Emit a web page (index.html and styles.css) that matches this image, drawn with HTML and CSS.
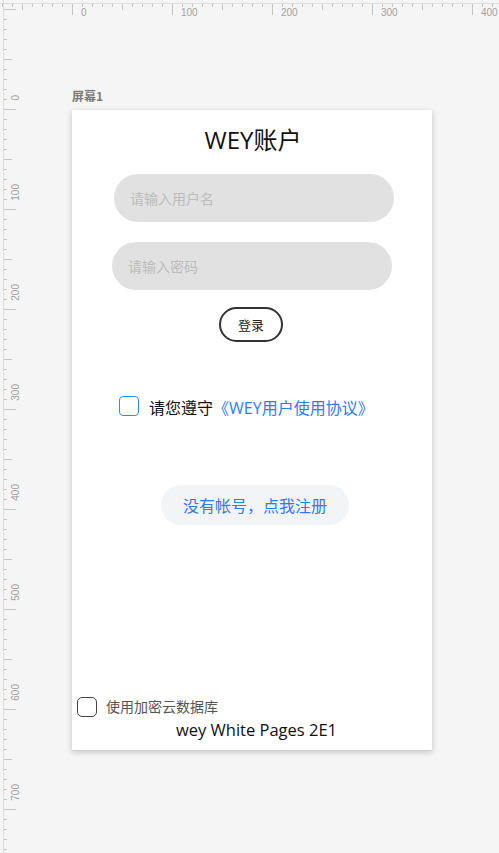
FILE: index.html
```html
<!DOCTYPE html>
<html lang="zh-CN">
<head>
    <meta charset="UTF-8">
    <meta name="viewport" content="width=device-width, initial-scale=1.0">
    <title>WEY账户 - 屏幕1</title>
    <link rel="stylesheet" href="styles.css">
</head>
<body>
    <div class="workspace">
        <div class="ruler ruler-top">
            <span class="mark">0</span>
            <span class="mark">100</span>
            <span class="mark">200</span>
            <span class="mark">300</span>
            <span class="mark">400</span>
        </div>
        <div class="ruler ruler-left">
            <div class="cell"><span class="mark">0</span></div>
            <div class="cell"><span class="mark">100</span></div>
            <div class="cell"><span class="mark">200</span></div>
            <div class="cell"><span class="mark">300</span></div>
            <div class="cell"><span class="mark">400</span></div>
            <div class="cell"><span class="mark">500</span></div>
            <div class="cell"><span class="mark">600</span></div>
            <div class="cell"><span class="mark">700</span></div>
        </div>

        <main class="canvas">
            <div class="screen-name">屏幕1</div>
            <section class="phone">
                <h1 class="title">WEY账户</h1>
                <input class="field field-user" type="text" placeholder="请输入用户名">
                <input class="field field-pass" type="password" placeholder="请输入密码">
                <button class="btn-login">登录</button>

                <label class="agree">
                    <span class="box box-blue"></span>
                    <span class="agree-text">请您遵守<a class="link" href="#">《WEY用户使用协议》</a></span>
                </label>

                <button class="btn-register">没有帐号，点我注册</button>

                <div class="bottom">
                    <label class="cloud">
                        <span class="box"></span>
                        <span>使用加密云数据库</span>
                    </label>
                    <p class="footer">wey White Pages 2E1</p>
                </div>
            </section>
        </main>
    </div>
</body>
</html>
```

FILE: styles.css
```css
* {
    margin: 0;
    padding: 0;
    box-sizing: border-box;
}

body {
    background: #f5f5f5;
    font-family: 'Open Sans', 'Noto Sans CJK SC', sans-serif;
    color: #111;
    overflow: hidden;
}

.workspace {
    display: grid;
    grid-template-columns: 20px 1fr;
    grid-template-rows: 20px 1fr;
    height: 853px;
    overflow: hidden;
}

/* rulers */
.ruler {
    font-family: 'Liberation Sans', sans-serif;
    font-size: 10px;
    line-height: 10px;
    color: #a0a0a0;
}

.ruler-top {
    grid-column: 1 / 3;
    grid-row: 1;
    display: flex;
    padding: 8px 0 0 72px;
    overflow: hidden;
    background:
        linear-gradient(#dedede, #dedede) 0 3px / 100% 1px no-repeat,
        linear-gradient(to right, #c4c4c4 1px, transparent 1px) 2px 3px / 10px 4px repeat-x,
        linear-gradient(to right, #c4c4c4 1px, transparent 1px) 22px 3px / 100px 7px repeat-x,
        linear-gradient(to right, #c4c4c4 1px, transparent 1px) 72px 3px / 100px 12px repeat-x;
}

.ruler-top .mark {
    flex: 0 0 100px;
    padding-left: 9px;
}

.ruler-top .mark:last-child {
    flex: 0 1 auto;
}

.ruler-left {
    grid-column: 1;
    grid-row: 1 / 3;
    display: flex;
    flex-direction: column;
    padding-top: 9px;
    overflow: hidden;
    background:
        linear-gradient(#dedede, #dedede) 3px 0 / 1px 100% no-repeat,
        linear-gradient(#c4c4c4 1px, transparent 1px) 3px 9px / 4px 10px repeat-y,
        linear-gradient(#c4c4c4 1px, transparent 1px) 3px 59px / 9px 100px repeat-y,
        linear-gradient(#c4c4c4 1px, transparent 1px) 3px 9px / 13px 100px repeat-y;
}

.ruler-left .cell {
    flex: 0 0 100px;
    display: flex;
    flex-direction: column;
    justify-content: flex-end;
    padding: 0 0 8px 11px;
}

.ruler-left .mark {
    width: 10px;
    writing-mode: vertical-rl;
    transform: rotate(180deg);
}

/* canvas */
.canvas {
    grid-column: 2;
    grid-row: 2;
    padding: 69px 0 0 52px;
}

.screen-name {
    font-family: 'Noto Sans CJK SC', sans-serif;
    font-size: 12px;
    line-height: 14px;
    font-weight: bold;
    color: #7b7b7b;
    margin-bottom: 7px;
}

.phone {
    width: 360px;
    height: 640px;
    background: #fff;
    box-shadow: 0 2px 6px rgba(0, 0, 0, 0.22);
    display: flex;
    flex-direction: column;
    align-items: flex-start;
    padding: 14px 0 9px;
}

.title {
    align-self: stretch;
    text-align: center;
    padding-left: 2px;
    font-size: 24px;
    line-height: 32px;
    font-weight: normal;
    color: #111;
}

.field {
    width: 280px;
    height: 48px;
    border: none;
    border-radius: 24px;
    background: #e1e1e1;
    padding: 0 16px;
    font-family: 'Noto Sans CJK SC', sans-serif;
    font-size: 14px;
    outline: none;
}

.field::placeholder {
    color: #bcbcbc;
}

.field-user {
    margin: 18px 0 0 42px;
}

.field-pass {
    margin: 20px 0 0 40px;
}

.btn-login {
    margin: 17px 0 0 147px;
    width: 64px;
    height: 35px;
    border: 2px solid #333;
    border-radius: 18px;
    background: #fff;
    font-family: 'Noto Sans CJK SC', sans-serif;
    font-size: 13px;
    color: #222;
    cursor: pointer;
}

.box {
    flex: 0 0 20px;
    width: 20px;
    height: 20px;
    border: 1.5px solid #444;
    border-radius: 5px;
    background: #fff;
}

.box-blue {
    border-color: #2f8cf0;
    border-radius: 4px;
}

.agree {
    display: flex;
    align-items: flex-start;
    gap: 10px;
    margin: 54px 0 0 47px;
    font-size: 16px;
    line-height: 20px;
    color: #111;
}

.agree-text {
    padding-top: 2px;
}

.link {
    color: #2e7bf4;
    text-decoration: none;
}

.btn-register {
    margin: 67px 0 0 89px;
    width: 188px;
    height: 40px;
    border: none;
    border-radius: 20px;
    background: #f3f4f6;
    font-family: 'Noto Sans CJK SC', sans-serif;
    font-size: 16px;
    color: #2e7bf4;
    cursor: pointer;
}

.bottom {
    margin-top: auto;
    align-self: stretch;
}

.cloud {
    display: flex;
    align-items: center;
    gap: 9px;
    margin-left: 5px;
    font-size: 14px;
    line-height: 20px;
    color: #555;
}

.footer {
    margin-top: 2px;
    padding-left: 9px;
    text-align: center;
    font-size: 16.5px;
    line-height: 22px;
    color: #111;
}
```
